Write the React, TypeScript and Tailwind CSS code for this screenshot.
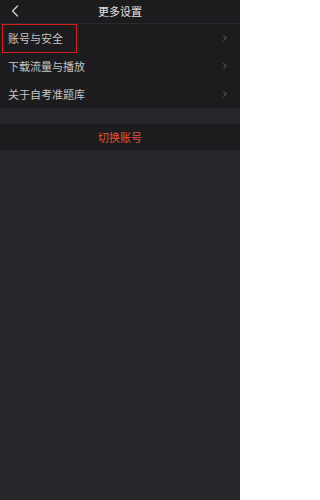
import { ChevronLeft, ChevronRight } from 'lucide-react';

const items = ['账号与安全', '下载流量与播放', '关于自考准题库'];

export default function App() {
  return (
    <div
      className="min-h-[500px] w-[240px] bg-[#26262a] text-[11px]"
      style={{ fontFamily: '"Noto Sans CJK SC", "Noto Sans", sans-serif' }}
    >
      <div className="relative flex h-[24px] items-center justify-center bg-[#1c1c1e] border-b border-[#2a2a2e]">
        <ChevronLeft className="absolute left-[5px] top-[1px] h-[20px] w-[20px] text-[#d0d0d0]" strokeWidth={1.5} />
        <span className="text-[11px] text-[#e0e0e0]">更多设置</span>
      </div>
      <div className="bg-[#1c1c1e]">
        {items.map((label, i) => (
          <div key={label} className="relative flex h-[28px] items-center justify-between pl-[8px] pr-[10px]">
            {i === 0 && (
              <div className="absolute left-[2px] top-0 h-[29px] w-[75px] border border-[#d21b1b]" />
            )}
            <span className="text-[#c4c4c4]">{label}</span>
            <ChevronRight className="h-[10px] w-[10px] text-[#7a7a7a]" strokeWidth={2} />
          </div>
        ))}
      </div>
      <div className="h-[16px]" />
      <div className="flex h-[26px] items-center justify-center bg-[#1c1c1e]">
        <span className="text-[#e0533a]">切换账号</span>
      </div>
    </div>
  );
}
